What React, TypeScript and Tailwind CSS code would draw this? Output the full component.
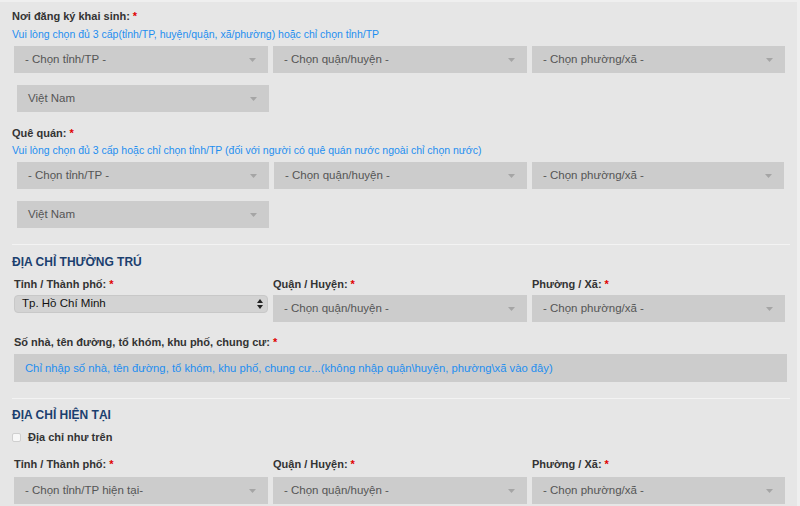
import React from "react";

const font = { fontFamily: '"Liberation Sans", Arial, Helvetica, sans-serif' };

function Req() {
  return <span className="text-[#e00000] ml-[3px]">*</span>;
}

function Label({ children, className = "" }: { children: React.ReactNode; className?: string }) {
  return (
    <div className={`text-[11px] leading-4 font-bold text-[#333] ${className}`}>
      {children}
      <Req />
    </div>
  );
}

function Select({ text, className = "" }: { text: string; className?: string }) {
  return (
    <div className={`h-[27px] bg-[#cccccc] flex items-center justify-between pl-[11px] pr-[12px] ${className}`}>
      <span className="text-[11.5px] text-[#555]">{text}</span>
      <svg width="7" height="4" viewBox="0 0 7 4">
        <path d="M0 0 L7 0 L3.5 4 Z" fill="#a5a5a5" />
      </svg>
    </div>
  );
}

function Hint({ children, className = "" }: { children: React.ReactNode; className?: string }) {
  return <div className={`text-[10.5px] leading-4 text-[#1e8ef0] ${className}`}>{children}</div>;
}

function Heading({ children, className = "" }: { children: React.ReactNode; className?: string }) {
  return <div className={`text-[12px] leading-4 font-bold text-[#1b3f6f] ${className}`}>{children}</div>;
}

function Divider({ className = "" }: { className?: string }) {
  return <div className={`h-px bg-[#f3f3f3] w-[778px] ${className}`} />;
}

export default function App() {
  return (
    <div className="w-[800px] h-[506px] bg-[#efefef] overflow-hidden" style={font}>
      <div className="mt-[2px] w-[797px] h-[504px] bg-[#e6e6e6] pl-[12px]">
        {/* Nơi đăng ký khai sinh */}
        <Label className="pt-[6px]">Nơi đăng ký khai sinh:</Label>
        <Hint className="mt-[2px]">Vui lòng chọn đủ 3 cấp(tỉnh/TP, huyện/quận, xã/phường) hoặc chỉ chọn tỉnh/TP</Hint>
        <div className="mt-[4px] ml-[2px] grid grid-cols-[254px_254px_253px] gap-x-[5px]">
          <Select text="- Chọn tỉnh/TP -" />
          <Select text="- Chọn quận/huyện -" />
          <Select text="- Chọn phường/xã -" />
        </div>
        <Select text="Việt Nam" className="mt-[12px] ml-[5px] w-[252px] h-[26px]" />

        {/* Quê quán */}
        <Label className="mt-[13px]">Quê quán:</Label>
        <Hint className="mt-[1px]">
          Vui lòng chọn đủ 3 cấp hoặc chỉ chọn tỉnh/TP (đối với người có quê quán nước ngoài chỉ chọn nước)
        </Hint>
        <div className="mt-[4px] ml-[5px] grid grid-cols-[252px_253px_252px] gap-x-[5px]">
          <Select text="- Chọn tỉnh/TP -" />
          <Select text="- Chọn quận/huyện -" />
          <Select text="- Chọn phường/xã -" />
        </div>
        <Select text="Việt Nam" className="mt-[12px] ml-[5px] w-[252px]" />

        <Divider className="mt-[16px]" />

        {/* Địa chỉ thường trú */}
        <Heading className="mt-[9px]">ĐỊA CHỈ THƯỜNG TRÚ</Heading>
        <div className="mt-[6px] ml-[2px] grid grid-cols-[254px_254px_253px] gap-x-[5px]">
          <Label>Tỉnh / Thành phố:</Label>
          <Label>Quận / Huyện:</Label>
          <Label>Phường / Xã:</Label>
          <div className="mt-[3px] h-[18px] rounded-[4px] bg-[#d3d3d3] border border-[#c8c8c8] flex items-center justify-between pl-[7px] pr-[4px]">
            <span className="text-[11.5px] text-[#111]">Tp. Hồ Chí Minh</span>
            <svg width="6" height="10" viewBox="0 0 6 10">
              <path d="M0 4 L3 0 L6 4 Z" fill="#222" />
              <path d="M0 6 L3 10 L6 6 Z" fill="#222" />
            </svg>
          </div>
          <Select text="- Chọn quận/huyện -" className="mt-[3px]" />
          <Select text="- Chọn phường/xã -" className="mt-[3px]" />
        </div>
        <Label className="mt-[12px] ml-[2px]">Số nhà, tên đường, tổ khóm, khu phố, chung cư:</Label>
        <div className="mt-[4px] ml-[2px] w-[773px] h-[28px] bg-[#cccccc] flex items-center pl-[11px]">
          <span className="text-[11.25px] text-[#1e8ef0]">
            Chỉ nhập số nhà, tên đường, tổ khóm, khu phố, chung cư...(không nhập quận\huyện, phường\xã vào đây)
          </span>
        </div>

        <Divider className="mt-[16px]" />

        {/* Địa chỉ hiện tại */}
        <Heading className="mt-[8px]">ĐỊA CHỈ HIỆN TẠI</Heading>
        <div className="mt-[6px] flex items-center gap-[7px]">
          <div className="w-[9px] h-[9px] rounded-[2px] bg-[#f7f7f7] border border-[#cfcfcf]" />
          <span className="text-[11px] leading-4 font-bold text-[#333]">Địa chỉ như trên</span>
        </div>
        <div className="mt-[11px] ml-[2px] grid grid-cols-[254px_254px_253px] gap-x-[5px]">
          <Label>Tỉnh / Thành phố:</Label>
          <Label>Quận / Huyện:</Label>
          <Label>Phường / Xã:</Label>
          <Select text="- Chọn tỉnh/TP hiện tại-" className="mt-[5px]" />
          <Select text="- Chọn quận/huyện -" className="mt-[5px]" />
          <Select text="- Chọn phường/xã -" className="mt-[5px]" />
        </div>
      </div>
    </div>
  );
}
